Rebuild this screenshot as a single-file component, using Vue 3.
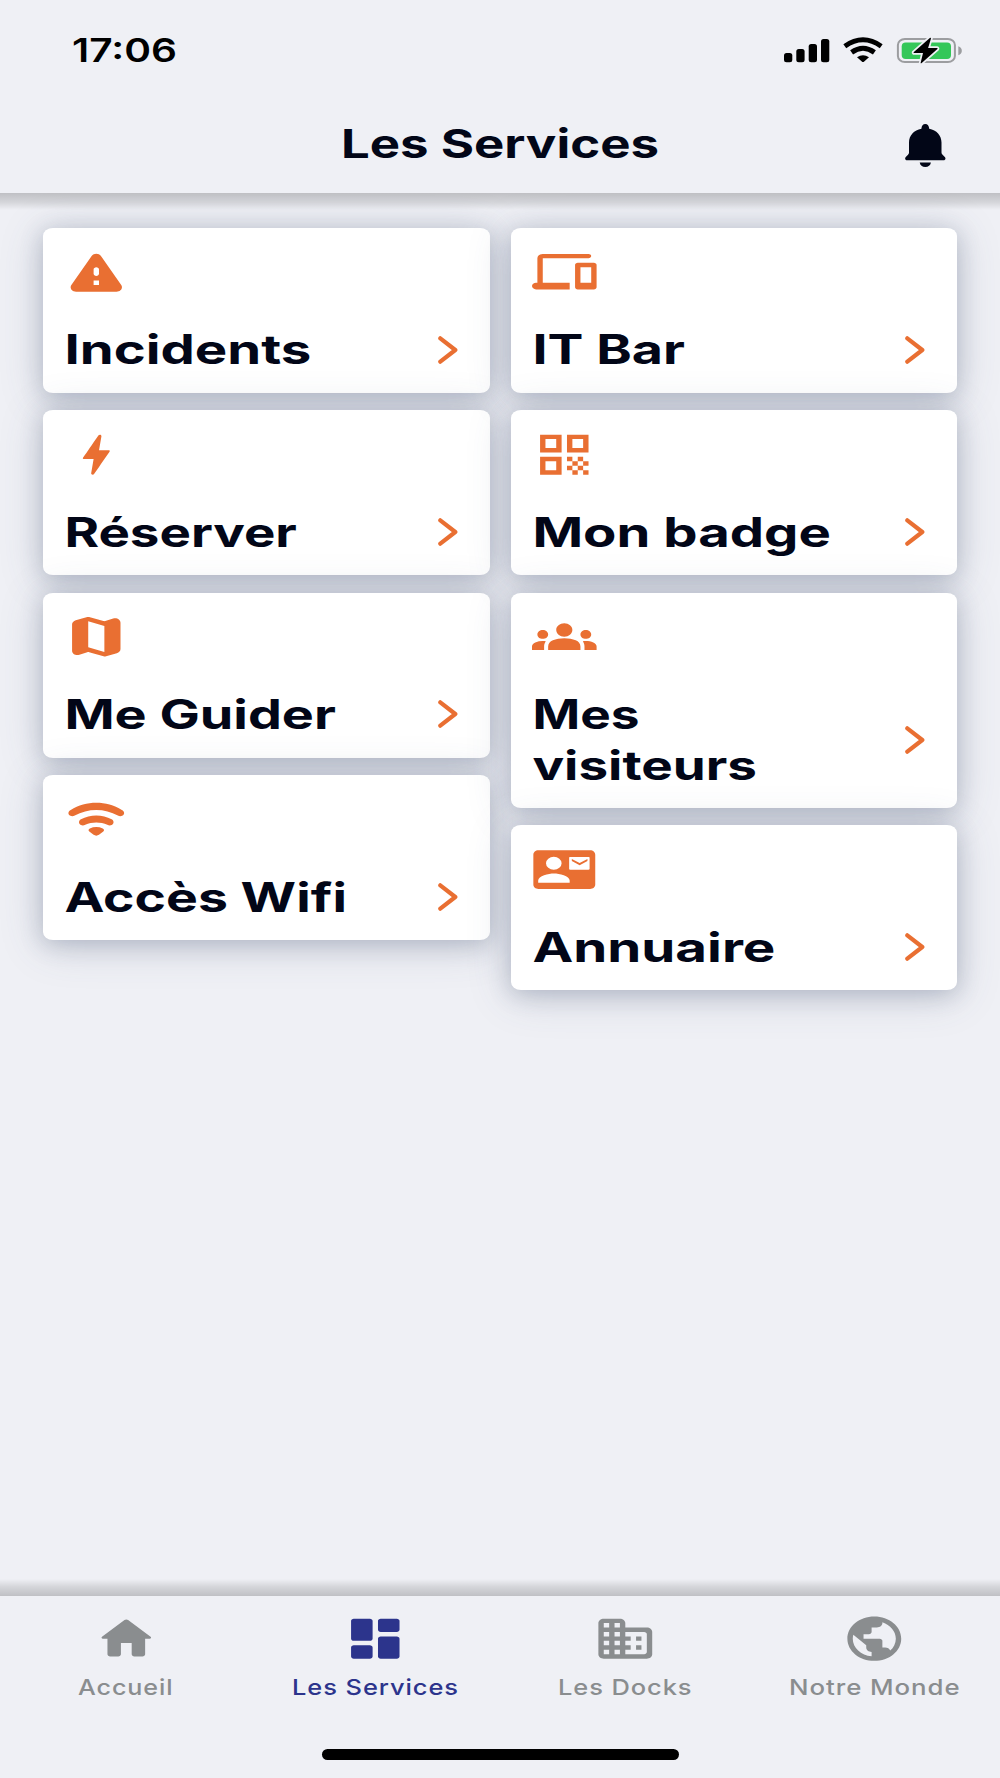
<script setup>
import { ref } from "vue";

const icons = {
  warning:
    "M4.47 21h15.06c1.54 0 2.5-1.67 1.73-3L13.73 4.99c-.77-1.33-2.69-1.33-3.46 0L2.74 18c-.77 1.33.19 3 1.73 3zM12 14c-.55 0-1-.45-1-1v-2c0-.55.45-1 1-1s1 .45 1 1v2c0 .55-.45 1-1 1zm1 4h-2v-2h2v2z",
  bolt: "M10.67 21c-.35 0-.62-.31-.57-.66L11 14H7.5c-.88 0-.33-.75-.31-.78 1.26-2.23 3.15-5.53 5.65-9.93.1-.18.3-.29.5-.29.35 0 .62.31.57.66l-.9 6.34h3.51c.4 0 .62.19.4.66-3.29 5.74-5.2 9.09-5.75 10.05-.11.18-.3.29-.5.29z",
  map: "M14.65 4.98l-5-1.75c-.42-.15-.88-.15-1.3-.01L4.36 4.56C3.55 4.84 3 5.6 3 6.46v11.85c0 1.41 1.41 2.37 2.72 1.86l2.93-1.14c.22-.09.47-.09.69-.01l5 1.75c.42.15.88.15 1.3.01l3.99-1.34c.81-.27 1.36-1.04 1.36-1.9V5.69c0-1.41-1.41-2.37-2.72-1.86l-2.93 1.14c-.22.08-.46.09-.69.01zM15 18.89l-6-2.11V5.11l6 2.11v11.67z",
  wifi: "M2.4 10.700c-1.100-.5-.9-2 .1-2.600 5.700-4.400 13.300-4.400 19 0 1 .6 1.200 2 .1 2.600-.5.300-1.100.200-1.600-.100-4.800-3.400-11.200-3.400-16 0-.5.300-1.100.400-1.600.100zM6.300 14.900c-1-.600-.9-2 0-2.600 3.400-2.300 8-2.300 11.400 0 .9.600 1 2 0 2.600-.5.300-1.100.200-1.600-.1-2.500-1.400-5.700-1.400-8.200 0-.5.300-1.100.400-1.600.1zM9.600 16.400c1.500-.8 3.300-.8 4.800 0 .6.400.6.900.2 1.400l-1.600 1.500c-.6.500-1.400.5-2 0l-1.600-1.500c-.4-.5-.4-1 .2-1.400z",
  devices:
    "M4 6h17c.55 0 1-.45 1-1s-.45-1-1-1H4c-1.1 0-2 .9-2 2v11h-.5c-.83 0-1.5.67-1.5 1.5S.67 20 1.5 20H14v-3H4V6zm19 2h-6c-.55 0-1 .45-1 1v10c0 .55.45 1 1 1h6c.55 0 1-.45 1-1V9c0-.55-.45-1-1-1zm-1 9h-4v-7h4v7z",
  qr: "M3 11h8V3H3v8zm2-6h4v4H5V5zM3 21h8v-8H3v8zm2-6h4v4H5v-4zM13 3v8h8V3h-8zm6 6h-4V5h4v4zM19 19h2v2h-2zM13 13h2v2h-2zM15 15h2v2h-2zM13 17h2v2h-2zM15 19h2v2h-2zM17 17h2v2h-2zM17 13h2v2h-2zM19 15h2v2h-2z",
  groups:
    "M12 12.75c1.63 0 3.07.39 4.24.9 1.08.48 1.76 1.56 1.76 2.73V18H6v-1.61c0-1.18.68-2.26 1.76-2.73 1.17-.52 2.61-.91 4.24-.91zM4 13c1.1 0 2-.9 2-2s-.9-2-2-2-2 .9-2 2 .9 2 2 2zm1.13 1.1c-.37-.06-.74-.1-1.13-.1-.99 0-1.93.21-2.78.58C.48 14.9 0 15.62 0 16.43V18h4.5v-1.61c0-.83.23-1.61.63-2.29zM20 13c1.1 0 2-.9 2-2s-.9-2-2-2-2 .9-2 2 .9 2 2 2zm4 3.43c0-.81-.48-1.53-1.22-1.85-.85-.37-1.79-.58-2.78-.58-.39 0-.76.04-1.13.1.4.68.63 1.46.63 2.29V18H24v-1.57zM12 6c1.66 0 3 1.34 3 3s-1.34 3-3 3-3-1.34-3-3 1.34-3 3-3z",
  contact:
    "M2.400 3.300h19.200c1.100 0 1.900.9 1.900 2v13.400c0 1.100-.8 2-1.900 2H2.400c-1.100 0-1.900-.9-1.900-2V5.300c0-1.100.8-2 1.900-2zM8.100 6.200a2.900 2.900 0 1 0 0 5.800 2.900 2.900 0 1 0 0-5.800zM2.300 17.900H14v-1c0-2.100-3.900-3.200-5.850-3.200S2.300 14.800 2.300 16.900zM14.200 6.300c-.3 0-.4.100-.4.400v4.900c0 .3.100.4.400.4h6.800c.3 0 .4-.1.400-.4V6.700c0-.3-.1-.4-.4-.4zM14.800 7.200l2.900 1.800 2.900-1.800v.9l-2.900 1.900-2.900-1.900z",
  home: "M10 19v-5h4v5c0 .55.45 1 1 1h3c.55 0 1-.45 1-1v-7h1.7c.46 0 .68-.57.33-.87L12.67 3.6c-.38-.34-.96-.34-1.34 0l-8.36 7.53c-.34.3-.13.87.33.87H5v7c0 .55.45 1 1 1h3c.55 0 1-.45 1-1z",
  dashboard:
    "M4 13h6c.55 0 1-.45 1-1V4c0-.55-.45-1-1-1H4c-.55 0-1 .45-1 1v8c0 .55.45 1 1 1zm0 8h6c.55 0 1-.45 1-1v-4c0-.55-.45-1-1-1H4c-.55 0-1 .45-1 1v4c0 .55.45 1 1 1zm10 0h6c.55 0 1-.45 1-1v-8c0-.55-.45-1-1-1h-6c-.55 0-1 .45-1 1v8c0 .55.45 1 1 1zM13 4v4c0 .55.45 1 1 1h6c.55 0 1-.45 1-1V4c0-.55-.45-1-1-1h-6c-.55 0-1 .45-1 1z",
  business:
    "M12 7V5c0-1.1-.9-2-2-2H4c-1.1 0-2 .9-2 2v14c0 1.1.9 2 2 2h16c1.1 0 2-.9 2-2V9c0-1.1-.9-2-2-2h-8zM6 19H4v-2h2v2zm0-4H4v-2h2v2zm0-4H4V9h2v2zm0-4H4V5h2v2zm4 12H8v-2h2v2zm0-4H8v-2h2v2zm0-4H8V9h2v2zm0-4H8V5h2v2zm9 12h-7v-2h2v-2h-2v-2h2v-2h-2V9h7c.55 0 1 .45 1 1v8c0 .55-.45 1-1 1zm-1-8h-2v2h2v-2zm0 4h-2v2h2v-2z",
  globe:
    "M12 2C6.48 2 2 6.48 2 12s4.48 10 10 10 10-4.48 10-10S17.52 2 12 2zm-1 17.93c-3.95-.49-7-3.85-7-7.93 0-.62.08-1.21.21-1.79L9 15v1c0 1.1.9 2 2 2v1.93zm6.9-2.54c-.26-.81-1-1.39-1.9-1.39h-1v-3c0-.55-.45-1-1-1H8v-2h2c.55 0 1-.45 1-1V7h2c1.1 0 2-.9 2-2v-.41c2.93 1.19 5 4.06 5 7.41 0 2.08-.8 3.97-2.1 5.39z",
};

// each title line carries its drawn width
const columns = [
  [
    { icon: "warning", lines: [["Incidents", 247]] },
    { icon: "bolt", lines: [["Réserver", 232.5]] },
    { icon: "map", lines: [["Me Guider", 271.5]] },
    { icon: "wifi", lines: [["Accès Wifi", 282.5]] },
  ],
  [
    { icon: "devices", lines: [["IT Bar", 152.5]] },
    { icon: "qr", lines: [["Mon badge", 298.5]] },
    { icon: "groups", lines: [["Mes", 107], ["visiteurs", 224.5]] },
    { icon: "contact", lines: [["Annuaire", 243]] },
  ],
];

const tabs = [
  { icon: "home", label: "Accueil", width: 95.5 },
  { icon: "dashboard", label: "Les Services", width: 167 },
  { icon: "business", label: "Les Docks", width: 134.5 },
  { icon: "globe", label: "Notre Monde", width: 171.5 },
];

const activeTab = ref("Les Services");
</script>

<template>
  <div class="app">
    <header class="header">
      <div class="status-bar">
        <svg class="clock" width="108" height="40">
          <text x="0" y="32.4" textLength="105" lengthAdjust="spacingAndGlyphs">17:06</text>
        </svg>
        <svg class="status-icons" width="180" height="28" viewBox="0 0 180 28">
          <rect x="0" y="16" width="8.300" height="9.200" rx="2.500" />
          <rect x="12.300" y="12" width="8.300" height="13.200" rx="2.500" />
          <rect x="24.700" y="7" width="8.300" height="18.200" rx="2.500" />
          <rect x="37" y="2" width="8.300" height="23.200" rx="2.500" />
          <g class="wifi-arcs">
            <path d="M60.800 9.200Q79 -3.600 97.200 9.200" />
            <path d="M67.600 15.400Q79 7.200 90.400 15.400" />
          </g>
          <path d="M73 20.300Q79 16 85 20.300L80.200 24.500Q79 25.500 77.800 24.500Z" />
          <rect class="battery-body" x="113.900" y="1.900" width="57" height="23" rx="7" ry="6" />
          <path class="battery-tip" d="M174.300 9.200C179 10.600 179 16.800 174.300 18.200Z" />
          <rect class="battery-level" x="117.700" y="5.400" width="49.300" height="16.600" rx="4" />
          <path
            class="battery-bolt"
            d="M145.800.900L129.600 15.200C129.400 15.700 129.700 16 130.200 16H139L136.600 26C136.700 26.500 137.400 26.300 137.700 26L153.400 12.100C153.800 11.500 153.500 11.100 152.900 11.100H144.100L147 1.400C147.100.700 146.300.500 145.800.900Z"
          />
        </svg>
      </div>
      <div class="title-bar">
        <h1 class="page-title">
          <svg width="319" height="56">
            <text x="0" y="43" textLength="318" lengthAdjust="spacingAndGlyphs">Les Services</text>
          </svg>
        </h1>
        <svg class="bell" width="41" height="43" viewBox="0 0 41 43">
          <path
            d="M20.300 0C18 0 16.600 1.600 16.400 4.800C9 6.200 4 11.500 4 18.500V28.500Q4 30 3 30.800L.8 33C-.6 34.400.3 36.300 2.200 36.300H38.400C40.300 36.300 41.200 34.400 39.800 33L37.600 30.800Q36.500 30 36.500 28.500V18.500C36.500 11.500 31.600 6.200 24.200 4.800C24 1.600 22.600 0 20.300 0Z"
          />
          <path d="M14.700 38.400H25.900C25.500 41.200 23.300 43 20.300 43S15.100 41.200 14.700 38.400Z" />
        </svg>
      </div>
    </header>

    <main class="services">
      <div v-for="(cards, i) in columns" :key="i" class="column">
        <div v-for="card in cards" :key="card.icon" class="card">
          <svg class="card-icon" viewBox="0 0 24 24" preserveAspectRatio="none">
            <path fill-rule="evenodd" :d="icons[card.icon]" />
          </svg>
          <div class="card-row">
            <div class="card-title">
              <svg
                v-for="[text, width] in card.lines"
                :key="text"
                class="title-line"
                :width="width"
                height="50.3"
              >
                <text x="0.4" y="39.8" :textLength="width" lengthAdjust="spacingAndGlyphs">{{ text }}</text>
              </svg>
            </div>
            <svg class="chevron" width="20" height="28" viewBox="0 0 20 28">
              <path d="M2.300 2.300L17.300 14L2.300 25.700" />
            </svg>
          </div>
        </div>
      </div>
    </main>

    <nav class="tab-bar">
      <div class="tabs">
        <div
          v-for="tab in tabs"
          :key="tab.label"
          class="tab"
          :class="{ active: tab.label === activeTab }"
          @click="activeTab = tab.label"
        >
          <svg class="tab-icon" viewBox="0 0 24 24" preserveAspectRatio="none">
            <path fill-rule="evenodd" :d="icons[tab.icon]" />
          </svg>
          <svg class="tab-label" :width="tab.width" height="40">
            <text x="0" y="30.2" :textLength="tab.width" lengthAdjust="spacingAndGlyphs">{{ tab.label }}</text>
          </svg>
        </div>
      </div>
      <div class="home-indicator"></div>
    </nav>
  </div>
</template>

<style>
body {
  margin: 0;
  background: #eff0f5;
}
</style>

<style scoped>
.app {
  display: flex;
  flex-direction: column;
  width: 1000px;
  height: 1778px;
  overflow: hidden;
  background: #eff0f5;
  font-family: Inter, "Liberation Sans", sans-serif;
}

svg {
  display: block;
  flex-shrink: 0;
}

.title-line,
.page-title svg,
.tab-label,
.clock {
  overflow: visible;
}

/* ======================== Header ======================== */

.header {
  position: relative;
  z-index: 1;
  box-sizing: border-box;
  height: 193px;
  padding-top: 30px;
  background: #eff0f5;
}

.header::after,
.tab-bar::before {
  content: "";
  position: absolute;
  left: 0;
  right: 0;
  height: 17px;
  pointer-events: none;
}

.header::after {
  top: 100%;
  background: linear-gradient(rgba(0, 0, 0, 0.2), rgba(0, 0, 0, 0.11) 55%, rgba(0, 0, 0, 0));
}

.status-bar {
  display: flex;
  align-items: flex-start;
  justify-content: space-between;
  height: 85px;
  padding: 0 36px 0 72px;
}

.clock text {
  font-size: 32.5px;
  font-weight: 600;
}

.status-icons {
  margin-top: 7px;
}

.wifi-arcs {
  fill: none;
  stroke: #000;
  stroke-width: 5;
}

.battery-body {
  fill: none;
  stroke: #9c9da0;
  stroke-width: 2;
}

.battery-tip {
  fill: #9c9da0;
}

.battery-level {
  fill: #34c759;
}

.battery-bolt {
  fill: #000;
  stroke: #eff0f5;
  stroke-width: 3.5;
  paint-order: stroke;
}

.title-bar {
  display: grid;
  grid-template-columns: 1fr 319px 1fr;
  align-items: start;
}

.page-title {
  grid-column: 2;
  margin: 0;
}

.page-title text {
  fill: #020617;
  font-size: 39.5px;
  font-weight: 700;
}

.bell {
  justify-self: end;
  margin: 9px 54px 0 0;
  fill: #020617;
}

/* ======================== Cards ======================== */

.services {
  flex: 1;
  display: grid;
  grid-template-columns: 447px 446px;
  gap: 21.5px;
  align-items: start;
  padding: 35px 0 0 42.7px;
}

.column {
  display: flex;
  flex-direction: column;
  gap: 17.6px;
}

.card {
  box-sizing: border-box;
  padding: 17.2px 32px 18px 21px;
  border-radius: 10px / 8px;
  background: #fff;
  box-shadow:
    0 4px 22px rgba(70, 84, 115, 0.26),
    0 5px 44px rgba(70, 84, 115, 0.22);
}

.card-icon {
  width: 64.6px;
  height: 53.3px;
  fill: #e96f32;
}

.card-row {
  display: flex;
  align-items: center;
  justify-content: space-between;
  margin-top: 26px;
}

.title-line text {
  fill: #020617;
  font-size: 40.5px;
  font-weight: 700;
}

.chevron {
  fill: none;
  stroke: #e96f32;
  stroke-width: 4.2;
  stroke-linecap: round;
  stroke-linejoin: round;
}

/* ======================== Tab bar ======================== */

.tab-bar {
  position: relative;
  display: flex;
  flex-direction: column;
  align-items: center;
  justify-content: space-between;
  box-sizing: border-box;
  height: 182px;
  padding: 15.5px 0 18px;
  background: #eff0f5;
}

.tab-bar::before {
  bottom: 100%;
  background: linear-gradient(to top, rgba(0, 0, 0, 0.2), rgba(0, 0, 0, 0.11) 55%, rgba(0, 0, 0, 0));
}

.tabs {
  display: grid;
  grid-template-columns: repeat(4, 249.4px);
  width: 100%;
  padding-left: 1.4px;
  box-sizing: border-box;
}

.tab {
  display: flex;
  flex-direction: column;
  align-items: center;
  fill: #8a8d8f;
  cursor: pointer;
}

.tab.active {
  fill: #2c348c;
}

.tab-icon {
  width: 64.6px;
  height: 53.3px;
}

.tab-label text {
  font-size: 21.8px;
  font-weight: 500;
  letter-spacing: 0.8px;
}

.home-indicator {
  width: 357px;
  height: 11px;
  border-radius: 6px;
  background: #000;
}
</style>
